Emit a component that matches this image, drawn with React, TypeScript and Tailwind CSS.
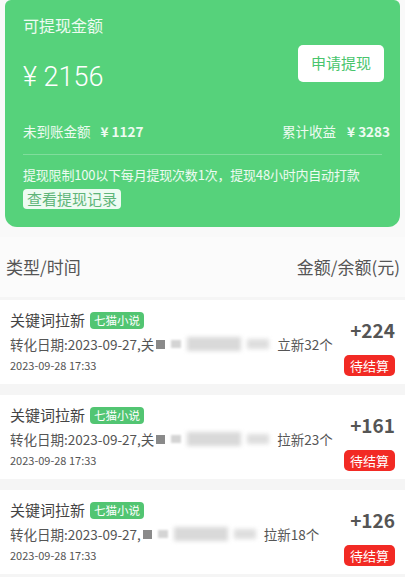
const items = [
  { amount: '+224', pre: '关', post: '立新32个' },
  { amount: '+161', pre: '关', post: '拉新23个' },
  { amount: '+126', pre: '', post: '拉新18个' },
];

function Blur() {
  return (
    <span className="inline-flex items-center gap-[6px] mx-[2px] align-middle">
      <span className="w-[9px] h-[9px] bg-[#8a8a8a] blur-[0.5px]" />
      <span className="w-[10px] h-[8px] bg-[#d4d4d4] blur-[1px]" />
      <span className="w-[54px] h-[14px] bg-[#d9d9d9] blur-[2px]" />
      <span className="w-[22px] h-[10px] bg-[#dedede] blur-[2px]" />
    </span>
  );
}

export default function App() {
  return (
    <div
      className="w-[405px] h-[577px] overflow-hidden bg-[#f5f5f5] text-[#333]"
      style={{ fontFamily: '"Noto Sans CJK SC", "Noto Sans", sans-serif' }}
    >
      {/* Balance card */}
      <div className="bg-[#f9f9f9] px-[5px] pb-[10px]">
        <div className="bg-[#56d27b] rounded-b-[12px] rounded-t-[6px] px-[18px] pt-[14px] pb-[17px] text-white">
          <div className="flex justify-between">
            <div>
              <div className="text-[16px] leading-[22px] text-white/90">可提现金额</div>
              <div
                className="mt-[25px] text-[27px] leading-[32px] font-light"
                style={{ fontFamily: 'Roboto, "Noto Sans CJK SC", sans-serif' }}
              >
                ¥ 2156
              </div>
            </div>
            <button className="mt-[31px] mr-[-2px] w-[86px] h-[37px] bg-white rounded-[5px] text-[#48c56d] text-[15px]">
              申请提现
            </button>
          </div>
          <div className="mt-[29px] flex justify-between items-center text-[13.5px] leading-[18px] mr-[-8px]">
            <div className="text-white/90">
              未到账金额<span className="ml-[10px] font-bold">¥ 1127</span>
            </div>
            <div className="text-white/90">
              累计收益<span className="ml-[11px] font-bold">¥ 3283</span>
            </div>
          </div>
          <div className="mt-[14px] h-px bg-white/25" />
          <div className="mt-[11px] text-[13px] leading-[18px] text-white/90 tracking-[-0.2px]">
            提现限制100以下每月提现次数1次，提现48小时内自动打款
          </div>
          <div className="mt-[5px] inline-block bg-white/90 rounded-[4px] px-[4px] text-[15px] leading-[20px] text-[#5fb579]">
            查看提现记录
          </div>
        </div>
      </div>

      {/* Header */}
      <div className="bg-[#fbfbfb] flex justify-between items-center px-[6px] pr-[5px] h-[60px] text-[17px] text-[#555]">
        <span>类型/时间</span>
        <span>金额/余额(元)</span>
      </div>

      {/* Records */}
      <div className="mt-[3px] flex flex-col gap-[11px]">
        {items.map((it, i) => (
          <div key={i} className="bg-white h-[84px] px-[10px] flex justify-between">
            <div className="pt-[10px]">
              <div className="flex items-center gap-[5px]">
                <span className="text-[15px] leading-[20px] text-[#444]">关键词拉新</span>
                <span className="bg-[#52c572] text-white text-[11.5px] leading-[17px] px-[4px] rounded-[4px]">七猫小说</span>
              </div>
              <div className="mt-[5px] text-[13.5px] leading-[18px] text-[#555] flex items-center whitespace-nowrap">
                转化日期:2023-09-27,{it.pre}
                <Blur />
                <span className="ml-[6px]">{it.post}</span>
              </div>
              <div className="mt-[4px] text-[11px] leading-[16px] text-[#555]">2023-09-28 17:33</div>
            </div>
            <div className="flex flex-col items-end pt-[18px]">
              <span className="text-[19px] leading-[24px] font-bold text-[#555]">{it.amount}</span>
              <span className="mt-[13px] bg-[#f22a24] text-white text-[13px] leading-[21px] px-[6px] rounded-[5px]">待结算</span>
            </div>
          </div>
        ))}
      </div>
    </div>
  );
}
